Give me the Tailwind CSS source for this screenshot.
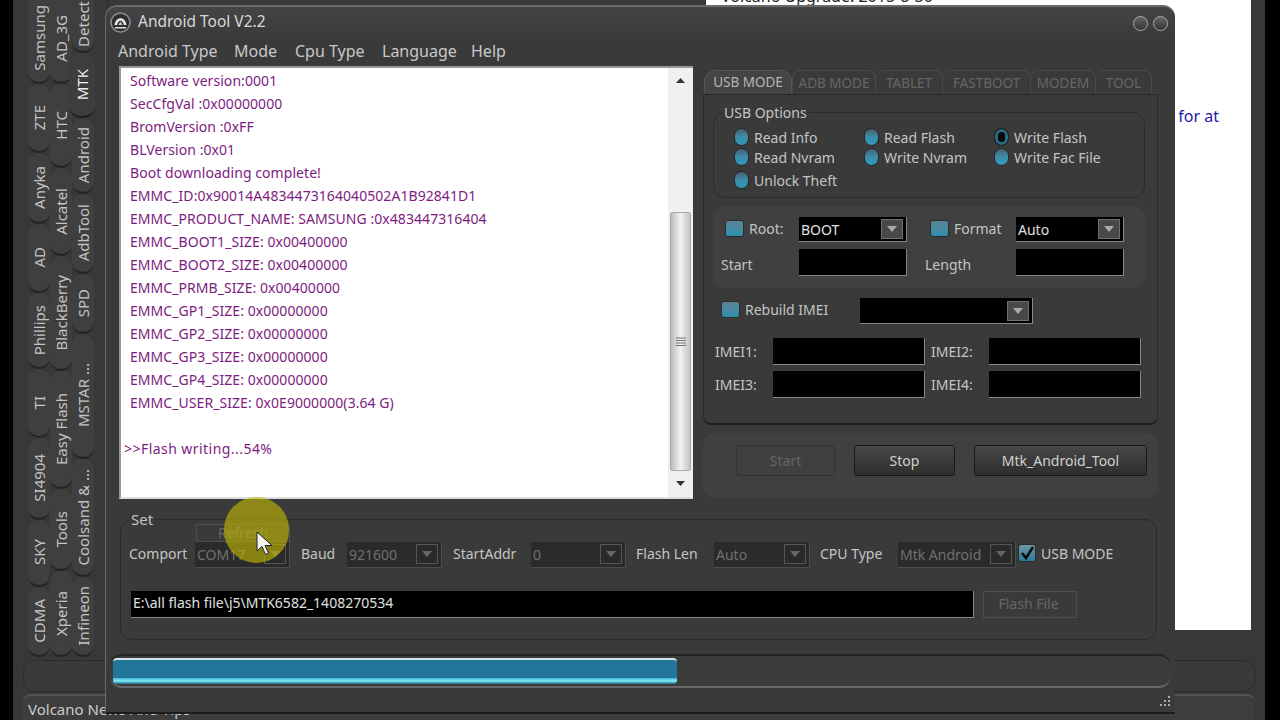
<!DOCTYPE html>
<html lang="en">
<head>
  <meta charset="UTF-8" />
  <title>Android Tool V2.2</title>
  <script src="https://cdn.jsdelivr.net/npm/@tailwindcss/browser@4"></script>
</head>
<body class="relative w-[1280px] h-[720px] overflow-hidden bg-black font-['Noto_Sans',sans-serif] text-[14px] text-[#c4c4c4] select-none">

  <!-- window behind -->
  <div class="absolute left-[13px] top-0 w-[1252px] h-[720px] bg-[#383838] flex flex-col">
    <div class="flex flex-1 min-h-0">
      <div class="w-[80px] ml-[15px] h-[657px] flex border-r border-[#2c2c2c] text-[15px]">
        <!-- column 1 -->
        <div class="w-[22px] flex flex-col">
          <div class="h-[84px] pb-[6px] rounded-b-xl bg-[#3f3f3f] border-b-2 border-[#242424] flex items-center justify-center"><span class="[writing-mode:vertical-rl] rotate-180">Samsung</span></div>
          <div class="h-[69px] rounded-xl bg-[#3f3f3f] border-b-2 border-[#242424] flex items-center justify-center"><span class="[writing-mode:vertical-rl] rotate-180">ZTE</span></div>
          <div class="h-[71px] rounded-xl bg-[#3f3f3f] border-b-2 border-[#242424] flex items-center justify-center"><span class="[writing-mode:vertical-rl] rotate-180">Anyka</span></div>
          <div class="h-[69px] rounded-xl bg-[#3f3f3f] border-b-2 border-[#242424] flex items-center justify-center"><span class="[writing-mode:vertical-rl] rotate-180">AD</span></div>
          <div class="h-[76px] rounded-xl bg-[#3f3f3f] border-b-2 border-[#242424] flex items-center justify-center"><span class="[writing-mode:vertical-rl] rotate-180">Phillips</span></div>
          <div class="h-[69px] rounded-xl bg-[#3f3f3f] border-b-2 border-[#242424] flex items-center justify-center"><span class="[writing-mode:vertical-rl] rotate-180">TI</span></div>
          <div class="h-[82px] rounded-xl bg-[#3f3f3f] border-b-2 border-[#242424] flex items-center justify-center"><span class="[writing-mode:vertical-rl] rotate-180">SI4904</span></div>
          <div class="h-[67px] rounded-xl bg-[#3f3f3f] border-b-2 border-[#242424] flex items-center justify-center"><span class="[writing-mode:vertical-rl] rotate-180">SKY</span></div>
          <div class="h-[70px] rounded-xl bg-[#3f3f3f] border-b-2 border-[#242424] flex items-center justify-center"><span class="[writing-mode:vertical-rl] rotate-180">CDMA</span></div>
        </div>
        <!-- column 2 -->
        <div class="w-[22px] flex flex-col">
          <div class="h-[84px] pb-[6px] rounded-b-xl bg-[#3f3f3f] border-b-2 border-[#242424] flex items-center justify-center"><span class="[writing-mode:vertical-rl] rotate-180">AD_3G</span></div>
          <div class="h-[84px] rounded-xl bg-[#3f3f3f] border-b-2 border-[#242424] flex items-center justify-center"><span class="[writing-mode:vertical-rl] rotate-180">HTC</span></div>
          <div class="h-[88px] rounded-xl bg-[#3f3f3f] border-b-2 border-[#242424] flex items-center justify-center"><span class="[writing-mode:vertical-rl] rotate-180">Alcatel</span></div>
          <div class="h-[115px] rounded-xl bg-[#3f3f3f] border-b-2 border-[#242424] flex items-center justify-center"><span class="[writing-mode:vertical-rl] rotate-180">BlackBerry</span></div>
          <div class="h-[118px] rounded-xl bg-[#3f3f3f] border-b-2 border-[#242424] flex items-center justify-center"><span class="[writing-mode:vertical-rl] rotate-180">Easy Flash</span></div>
          <div class="h-[82px] rounded-xl bg-[#3f3f3f] border-b-2 border-[#242424] flex items-center justify-center"><span class="[writing-mode:vertical-rl] rotate-180">Tools</span></div>
          <div class="h-[86px] rounded-xl bg-[#3f3f3f] border-b-2 border-[#242424] flex items-center justify-center"><span class="[writing-mode:vertical-rl] rotate-180">Xperia</span></div>
        </div>
        <!-- column 3 -->
        <div class="w-[22px] flex flex-col">
          <div class="h-[53px] pb-[4px] rounded-b-xl bg-[#3f3f3f] border-b-2 border-[#242424] flex items-center justify-center"><span class="[writing-mode:vertical-rl] rotate-180">Detect</span></div>
          <div class="h-[65px] rounded-xl bg-[#3d3d3d] border-b-2 border-[#1f1f1f] flex items-center justify-center -ml-[3px] w-[26px] text-[#f0f0f0]"><span class="[writing-mode:vertical-rl] rotate-180">MTK</span></div>
          <div class="h-[76px] rounded-xl bg-[#3f3f3f] border-b-2 border-[#242424] flex items-center justify-center"><span class="[writing-mode:vertical-rl] rotate-180">Android</span></div>
          <div class="h-[80px] rounded-xl bg-[#3f3f3f] border-b-2 border-[#242424] flex items-center justify-center"><span class="[writing-mode:vertical-rl] rotate-180">AdbTool</span></div>
          <div class="h-[60px] rounded-xl bg-[#3f3f3f] border-b-2 border-[#242424] flex items-center justify-center"><span class="[writing-mode:vertical-rl] rotate-180">SPD</span></div>
          <div class="h-[125px] rounded-xl bg-[#3f3f3f] border-b-2 border-[#242424] flex items-center justify-center"><span class="[writing-mode:vertical-rl] rotate-180">MSTAR ...</span></div>
          <div class="h-[118px] rounded-xl bg-[#3f3f3f] border-b-2 border-[#242424] flex items-center justify-center"><span class="[writing-mode:vertical-rl] rotate-180">Coolsand &amp; ...</span></div>
          <div class="h-[80px] rounded-xl bg-[#3f3f3f] border-b-2 border-[#242424] flex items-center justify-center"><span class="[writing-mode:vertical-rl] rotate-180">Infineon</span></div>
        </div>
      </div>
      <!-- page behind the tool window -->
      <div class="ml-[598px] w-[545px] h-[630px] bg-white text-[#2222aa] text-[16px] relative overflow-hidden">
        <div class="absolute left-[15px] -top-[16px] text-[#222] text-[16px] whitespace-nowrap">Volcano Upgrade: 2015-8-30</div>
        <div class="absolute right-[32px] top-[104px]">for at</div>
      </div>
    </div>
    <div class="mx-[10px] mb-[2px] h-[32px] rounded-xl bg-[#3a3a3a] border border-[#2b2b2b] shrink-0"></div>
    <div class="mx-[10px] h-[26px] rounded-t-lg bg-[#3d3d3d] border-t-2 border-[#555] pl-[5px] pt-[2px] text-[15px] text-[#ccc] shrink-0">Volcano News And Tips</div>
  </div>

  <!-- tool window -->
  <div class="absolute left-[105px] top-[5px] w-[1070px] h-[709px] rounded-t-xl border-t-2 border-l border-[#6a6a6a] border-b-2 border-b-[#1c1c1c] border-r-[#2a2a2a] bg-[#3a3a3a] flex flex-col">
    <div class="h-[29px] flex items-center pl-[4px] pr-[7px] shrink-0 bg-gradient-to-b from-[#454545] to-[#3a3a3a] rounded-t-xl">
      <svg class="w-[21px] h-[21px] mt-[1px]" viewBox="0 0 21 21">
        <circle cx="10.500" cy="10.500" r="9.500" fill="#2e2e2e" stroke="#8c8c8c" stroke-width="1.600"/>
        <path d="M4.500 13c.6-4.200 2.900-6.800 6-6.800s5.400 2.600 6 6.800h-2.600c-.5-2.600-1.700-4.200-3.400-4.200s-2.900 1.600-3.400 4.200z" fill="#e6e6e6"/>
        <path d="M10.500 9.500l2.300 3.500h-4.600z" fill="#bdbdbd"/>
        <path d="M5 15h11v1.500h-11z" fill="#dcdcdc"/>
      </svg>
      <span class="ml-[7px] text-[15.5px] text-[#d8d8d8]">Android Tool V2.2</span>
      <div class="ml-auto flex gap-[5px] mt-[3px]">
        <span class="w-[15px] h-[15px] rounded-full bg-gradient-to-b from-[#666] to-[#333] border border-[#aaa]"></span>
        <span class="w-[15px] h-[15px] rounded-full bg-gradient-to-b from-[#666] to-[#333] border border-[#aaa]"></span>
      </div>
    </div>
    <div class="h-[30px] pl-[12px] flex items-center text-[16px] text-[#c8c8c8] shrink-0">
      <span class="w-[116px]">Android Type</span><span class="w-[61px]">Mode</span><span class="w-[87px]">Cpu Type</span><span class="w-[89px]">Language</span><span>Help</span>
    </div>

    <div class="flex pl-[13px] shrink-0">
      <!-- log -->
      <div class="w-[574px] h-[433px] bg-white border-t-2 border-l-2 border-[#999] border-b-2 border-b-[#ddd] border-r-0 flex">
        <div class="flex-1 pl-[9px] pt-[1px] text-[14px] leading-[23px] tracking-[0.06px] text-[#7d1c80] whitespace-nowrap">
          <div>Software version:0001</div>
          <div>SecCfgVal :0x00000000</div>
          <div>BromVersion :0xFF</div>
          <div>BLVersion :0x01</div>
          <div>Boot downloading complete!</div>
          <div>EMMC_ID:0x90014A4834473164040502A1B92841D1</div>
          <div>EMMC_PRODUCT_NAME: SAMSUNG :0x483447316404</div>
          <div>EMMC_BOOT1_SIZE: 0x00400000</div>
          <div>EMMC_BOOT2_SIZE: 0x00400000</div>
          <div>EMMC_PRMB_SIZE: 0x00400000</div>
          <div>EMMC_GP1_SIZE: 0x00000000</div>
          <div>EMMC_GP2_SIZE: 0x00000000</div>
          <div>EMMC_GP3_SIZE: 0x00000000</div>
          <div>EMMC_GP4_SIZE: 0x00000000</div>
          <div>EMMC_USER_SIZE: 0x0E9000000(3.64 G)</div>
          <div class="h-[23px]"></div>
          <div class="-ml-[6px] tracking-[0.45px]">&gt;&gt;Flash writing...54%</div>
        </div>
        <!-- scrollbar -->
        <div class="w-[25px] bg-[#f0f0f0] flex flex-col items-center">
          <svg class="mt-[10px] w-[9px] h-[5px] shrink-0" viewBox="0 0 9 5"><path d="M0 5l4.500-5 4.500 5z" fill="#333"/></svg>
          <div class="mt-[129px] w-[21px] h-[259px] rounded-[2px] bg-gradient-to-r from-[#bbb] via-[#f2f2f2] to-[#c4c4c4] border border-[#aaa] flex items-center justify-center">
            <svg class="w-[10px] h-[10px]" viewBox="0 0 10 10"><path d="M0 1h10M0 3.500h10M0 6h10M0 8.500h10" stroke="#777" stroke-width="1"/></svg>
          </div>
          <svg class="mt-[10px] w-[9px] h-[5px] shrink-0" viewBox="0 0 9 5"><path d="M0 0l4.500 5 4.500-5z" fill="#333"/></svg>
        </div>
      </div>

      <!-- right column -->
      <div class="ml-[10px] w-[455px] pt-[4px] flex flex-col">
        <div class="h-[24px] flex pl-[1px] text-[13.5px] text-[#666]">
          <div class="w-[88px] rounded-t-xl bg-[#444] border-t border-x border-[#555] flex items-center justify-center text-[#b4b4b4]">USB MODE</div>
          <div class="w-[84px] rounded-t-lg border-t border-x border-[#4a4a4a] flex items-end justify-center pb-[1px]">ADB MODE</div>
          <div class="w-[67px] rounded-t-lg border-t border-r border-[#4a4a4a] flex items-end justify-center pb-[1px]">TABLET</div>
          <div class="w-[88px] rounded-t-lg border-t border-r border-[#4a4a4a] flex items-end justify-center pb-[1px]">FASTBOOT</div>
          <div class="w-[65px] rounded-t-lg border-t border-r border-[#4a4a4a] flex items-end justify-center pb-[1px]">MODEM</div>
          <div class="w-[56px] rounded-t-lg border-t border-r border-[#4a4a4a] flex items-end justify-center pb-[1px]">TOOL</div>
        </div>
        <div class="h-[331px] rounded-b-lg border-x border-t border-[#2a2a2a] border-b-2 border-b-[#1e1e1e] bg-[#3a3a3a] px-[9px] pt-[17px] flex flex-col">
          <!-- USB options -->
          <div class="relative h-[86px] w-[432px] rounded-xl border border-[#2a2a2a] shrink-0 pl-[20px] pt-[14px]">
            <div class="absolute left-[8px] -top-[11px] px-[2px] bg-[#3a3a3a] text-[#c4c4c4]">USB Options</div>
            <div class="grid grid-cols-[130px_130px_130px] auto-rows-[20px]">
              <label class="flex items-center gap-[5px]"><span class="shrink-0 w-[15px] h-[18px] rounded-full border border-[#262626] bg-gradient-to-b from-[#44606c] via-[#3a8dab] to-[#2f9ab8]"></span>Read Info</label>
              <label class="flex items-center gap-[5px]"><span class="shrink-0 w-[15px] h-[18px] rounded-full border border-[#262626] bg-gradient-to-b from-[#44606c] via-[#3a8dab] to-[#2f9ab8]"></span>Read Flash</label>
              <label class="flex items-center gap-[5px]"><span class="shrink-0 w-[15px] h-[18px] rounded-full border border-[#262626] bg-[#080808] shadow-[inset_0_0_0_3px_#2a6b84]"></span>Write Flash</label>
              <label class="flex items-center gap-[5px]"><span class="shrink-0 w-[15px] h-[18px] rounded-full border border-[#262626] bg-gradient-to-b from-[#44606c] via-[#3a8dab] to-[#2f9ab8]"></span>Read Nvram</label>
              <label class="flex items-center gap-[5px]"><span class="shrink-0 w-[15px] h-[18px] rounded-full border border-[#262626] bg-gradient-to-b from-[#44606c] via-[#3a8dab] to-[#2f9ab8]"></span>Write Nvram</label>
              <label class="flex items-center gap-[5px]"><span class="shrink-0 w-[15px] h-[18px] rounded-full border border-[#262626] bg-gradient-to-b from-[#44606c] via-[#3a8dab] to-[#2f9ab8]"></span>Write Fac File</label>
              <label class="flex items-center gap-[5px] mt-[6px]"><span class="shrink-0 w-[15px] h-[18px] rounded-full border border-[#262626] bg-gradient-to-b from-[#44606c] via-[#3a8dab] to-[#2f9ab8]"></span>Unlock Theft</label>
            </div>
          </div>
          <!-- root / format -->
          <div class="mt-[8px] h-[82px] w-[432px] rounded-xl bg-[#404040] shrink-0 pt-[11px] pl-[8px] grid grid-cols-[78px_108px_23px_86px_108px] grid-rows-[25px_27px] gap-y-[7px]">
            <label class="flex items-center gap-[5px] pl-[4px] pb-[3px]"><span class="w-[19px] h-[17px] rounded-[3px] border border-[#2c2c2c] bg-gradient-to-b from-[#5a8494] to-[#2a90b0]"></span>Root:</label>
            <div class="bg-black border-b border-r border-[#888] flex items-center justify-between pl-[2px] pr-[3px] text-[#e0e0e0]">BOOT<span class="w-[22px] h-[20px] bg-[#484848] border border-[#707070] flex items-center justify-center"><svg class="w-[10px] h-[6px]" viewBox="0 0 10 6"><path d="M0 0h10l-5 6z" fill="#aaa"/></svg></span></div>
            <span></span>
            <label class="flex items-center gap-[5px] pb-[3px]"><span class="w-[19px] h-[17px] rounded-[3px] border border-[#2c2c2c] bg-gradient-to-b from-[#5a8494] to-[#2a90b0]"></span>Format</label>
            <div class="bg-black border-b border-r border-[#888] flex items-center justify-between pl-[2px] pr-[3px] text-[#e0e0e0]">Auto<span class="w-[22px] h-[20px] bg-[#484848] border border-[#707070] flex items-center justify-center"><svg class="w-[10px] h-[6px]" viewBox="0 0 10 6"><path d="M0 0h10l-5 6z" fill="#aaa"/></svg></span></div>
            <span class="flex items-center mt-[3px]">Start</span>
            <div class="bg-black border-b border-r border-[#888]"></div>
            <span></span>
            <span class="flex items-center -ml-[5px] mt-[3px]">Length</span>
            <div class="bg-black border-b border-r border-[#888]"></div>
          </div>
          <!-- rebuild imei -->
          <div class="mt-[10px] h-[26px] flex items-center pl-[8px] shrink-0">
            <span class="w-[19px] h-[17px] mb-[4px] rounded-[3px] border border-[#2c2c2c] bg-gradient-to-b from-[#5a8494] to-[#2a90b0]"></span>
            <span class="ml-[5px] w-[115px] mb-[4px]">Rebuild IMEI</span>
            <div class="w-[173px] h-[26px] bg-black border-b border-r border-[#888] flex items-center justify-end pr-[3px]"><span class="w-[22px] h-[20px] bg-[#484848] border border-[#707070] flex items-center justify-center"><svg class="w-[10px] h-[6px]" viewBox="0 0 10 6"><path d="M0 0h10l-5 6z" fill="#aaa"/></svg></span></div>
          </div>
          <!-- imei inputs -->
          <div class="mt-[14px] grid grid-cols-[58px_152px_6px_58px_152px] auto-rows-[27px] gap-y-[6px] pl-[2px]">
            <span class="flex items-center">IMEI1:</span><div class="bg-black border-b border-r border-[#888]"></div><span></span>
            <span class="flex items-center">IMEI2:</span><div class="bg-black border-b border-r border-[#888]"></div>
            <span class="flex items-center">IMEI3:</span><div class="bg-black border-b border-r border-[#888]"></div><span></span>
            <span class="flex items-center">IMEI4:</span><div class="bg-black border-b border-r border-[#888]"></div>
          </div>
        </div>
        <!-- buttons -->
        <div class="mt-[8px] h-[65px] rounded-xl bg-[#404040] flex items-start pt-[12px] pl-[33px] gap-[19px] text-[#d0d0d0]">
          <button class="w-[99px] h-[31px] rounded-[3px] border border-[#333] text-[#666]">Start</button>
          <button class="w-[101px] h-[31px] rounded-[3px] border border-[#181818] bg-gradient-to-b from-[#484848] to-[#2e2e2e]">Stop</button>
          <button class="w-[173px] h-[31px] rounded-[3px] border border-[#181818] bg-gradient-to-b from-[#484848] to-[#2e2e2e]">Mtk_Android_Tool</button>
        </div>
      </div>
    </div>

    <!-- set group -->
    <div class="relative mt-[20px] ml-[14px] w-[1037px] h-[121px] rounded-xl border border-[#2a2a2a] shrink-0 pl-[8px] pt-[21px]">
      <div class="absolute left-[8px] -top-[12px] px-[2px] bg-[#3a3a3a] text-[15px]">Set</div>
      <div class="flex items-center h-[27px]">
        <span class="w-[66px] mb-[3px]">Comport</span>
        <div class="w-[95px] h-[26px] bg-[#2a2a2a] border-b border-r border-[#4c4c4c] flex items-center justify-between pl-[2px] pr-[3px] text-[#707070]">COM17<span class="w-[22px] h-[20px] border border-[#555] flex items-center justify-center"><svg class="w-[10px] h-[6px]" viewBox="0 0 10 6"><path d="M0 0h10l-5 6z" fill="#666"/></svg></span></div>
        <span class="ml-[11px] w-[46px] mb-[3px]">Baud</span>
        <div class="w-[95px] h-[26px] bg-[#2a2a2a] border-b border-r border-[#4c4c4c] flex items-center justify-between pl-[2px] pr-[3px] text-[#707070]">921600<span class="w-[22px] h-[20px] border border-[#555] flex items-center justify-center"><svg class="w-[10px] h-[6px]" viewBox="0 0 10 6"><path d="M0 0h10l-5 6z" fill="#666"/></svg></span></div>
        <span class="ml-[11px] w-[78px] mb-[3px]">StartAddr</span>
        <div class="w-[95px] h-[26px] bg-[#2a2a2a] border-b border-r border-[#4c4c4c] flex items-center justify-between pl-[2px] pr-[3px] text-[#707070]">0<span class="w-[22px] h-[20px] border border-[#555] flex items-center justify-center"><svg class="w-[10px] h-[6px]" viewBox="0 0 10 6"><path d="M0 0h10l-5 6z" fill="#666"/></svg></span></div>
        <span class="ml-[10px] w-[78px] mb-[3px]">Flash Len</span>
        <div class="w-[96px] h-[26px] bg-[#2a2a2a] border-b border-r border-[#4c4c4c] flex items-center justify-between pl-[2px] pr-[3px] text-[#707070]">Auto<span class="w-[22px] h-[20px] border border-[#555] flex items-center justify-center"><svg class="w-[10px] h-[6px]" viewBox="0 0 10 6"><path d="M0 0h10l-5 6z" fill="#666"/></svg></span></div>
        <span class="ml-[10px] w-[78px] mb-[3px]">CPU Type</span>
        <div class="w-[118px] h-[26px] bg-[#2a2a2a] border-b border-r border-[#4c4c4c] flex items-center justify-between pl-[2px] pr-[3px] text-[#707070]">Mtk Android<span class="w-[22px] h-[20px] border border-[#555] flex items-center justify-center"><svg class="w-[10px] h-[6px]" viewBox="0 0 10 6"><path d="M0 0h10l-5 6z" fill="#666"/></svg></span></div>
        <span class="ml-[2px] mb-[3px] w-[18px] h-[18px] rounded-[3px] border border-[#2c2c2c] bg-gradient-to-b from-[#6a96a6] to-[#2a7a98] flex items-center justify-center"><svg class="w-[15px] h-[15px]" viewBox="0 0 15 15"><path d="M2 7l4 5 7-11" fill="none" stroke="#0c0c0c" stroke-width="2.500"/></svg></span>
        <span class="ml-[5px] mb-[3px]">USB MODE</span>
      </div>
      <div class="mt-[23px] flex items-center">
        <div class="ml-[2px] w-[843px] h-[27px] bg-black border-b border-r border-[#888] flex items-center pl-[2px] pb-[3px] text-[#e0e0e0]">E:\all flash file\j5\MTK6582_1408270534</div>
        <button class="ml-[9px] w-[94px] h-[27px] border border-[#4e4e4e] text-[#666] pb-[3px] pr-[3px]">Flash File</button>
      </div>
      <!-- refresh button sits over the comport row -->
      <button class="absolute left-[75px] top-[4px] w-[94px] h-[18px] border border-[#4e4e4e] text-[#666] leading-[16px]">Refresh</button>
    </div>

    <!-- progress -->
    <div class="mt-[14px] ml-[4px] w-[1061px] h-[34px] rounded-xl border-t-2 border-[#232323] border-b-2 border-b-[#666] bg-[#3c3c3c] pl-[3px] pt-[2px] shrink-0">
      <div class="w-[564px] h-[26px] rounded-[4px] border-t-2 border-[#d4e4ea] bg-[#22769a] relative overflow-hidden">
        <div class="absolute left-0 right-0 bottom-0 h-[6px] bg-gradient-to-b from-[#3fb4d4] via-[#84ecfa] to-[#1c6a88]"></div>
      </div>
    </div>
    <!-- resize grip -->
    <div class="flex-1 flex justify-end items-end pr-[3px] pb-[2px]">
      <svg class="w-[14px] h-[14px]" viewBox="0 0 14 14" fill="#aaa"><rect x="10" y="0" width="2" height="2"/><rect x="6" y="4" width="2" height="2"/><rect x="10" y="4" width="2" height="2"/><rect x="2" y="8" width="2" height="2"/><rect x="6" y="8" width="2" height="2"/><rect x="10" y="8" width="2" height="2"/></svg>
    </div>
  </div>

  <!-- video highlight and cursor over the refresh button -->
  <div class="absolute left-[224px] top-[497px] w-[65px] h-[66px] rounded-full bg-[#c4bc00]/60 pointer-events-none"></div>
  <svg class="absolute left-[256px] top-[531px] w-[18px] h-[25px]" viewBox="0 0 18 25"><path d="M1 1v19l5-4.500 3.500 8 3-1.500-3.500-7.500h7z" fill="#f4f4f4" stroke="#222" stroke-width="1"/></svg>
</body>
</html>
